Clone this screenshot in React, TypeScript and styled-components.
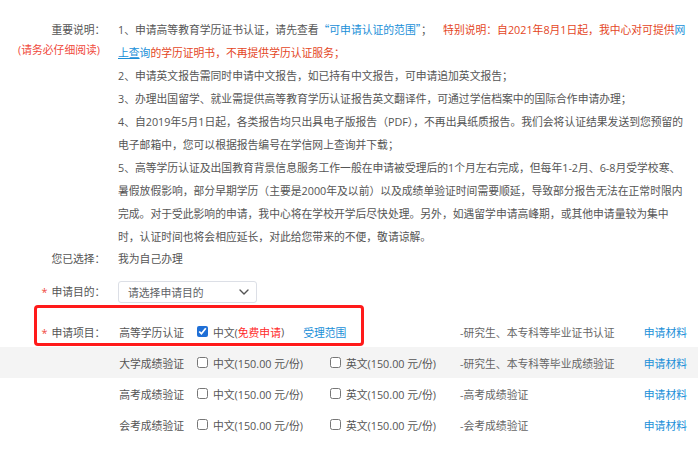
import React from 'react';
import styled, { createGlobalStyle } from 'styled-components';

const textColor = '#555';
const linkColor = '#1a8fd8';
const alertColor = '#e4461e';
const requiredColor = '#f04a3c';

const GlobalStyle = createGlobalStyle`
  html, body {
    margin: 0;
    padding: 0;
    background: #fff;
  }
  body {
    font-family: "Open Sans", "Noto Sans CJK SC", sans-serif;
    font-size: 10.8px;
    color: ${textColor};
  }
`;

const Page = styled.div`
  width: 698px;
  padding-top: 17.5px;
`;

const FieldRow = styled.div<{ $top?: number; $height?: number }>`
  display: grid;
  grid-template-columns: 100px 572px;
  column-gap: 18px;
  align-items: ${(p) => (p.$height ? 'center' : 'start')};
  margin-top: ${(p) => p.$top || 0}px;
  min-height: ${(p) => p.$height || 0}px;
`;

const Label = styled.div`
  display: flex;
  flex-direction: column;
  align-items: flex-end;
  text-align: right;
  line-height: 22px;
  white-space: nowrap;
  font-feature-settings: "halt";
`;

const NoteLabel = styled(Label)`
  line-height: 23px;
`;

const ReadCarefully = styled.span`
  color: ${requiredColor};
  line-height: 18px;
`;

const Required = styled.span`
  color: ${requiredColor};
  margin-right: 4px;
`;

const Notes = styled.div`
  line-height: 23px;
`;

const NoteItem = styled.p`
  margin: 0;
`;

const Link = styled.a<{ $underline?: boolean }>`
  color: ${linkColor};
  text-decoration: ${(p) => (p.$underline ? 'underline' : 'none')};
  cursor: pointer;
`;

const Quote = styled.span`
  font-family: "Noto Sans CJK SC", sans-serif;
  font-feature-settings: "fwid";
`;

const Alert = styled.span`
  color: ${alertColor};
`;

const Value = styled.div`
  line-height: 22px;
`;

const SelectBox = styled.div`
  box-sizing: border-box;
  width: 139px;
  height: 22px;
  display: flex;
  align-items: center;
  justify-content: space-between;
  padding: 0 7px 0 9px;
  border: 1px solid #dcdfe6;
  border-radius: 3px;
  color: #606266;
  background: #fff;
  cursor: pointer;
`;

const Items = styled.div`
  position: relative;
  margin-top: 13.5px;
`;

const ItemRow = styled.div<{ $shaded?: boolean }>`
  display: grid;
  grid-template-columns: 118px 79px 133px 130px 1fr auto;
  align-items: center;
  height: 31px;
  padding-right: 11px;
  background: ${(p) => (p.$shaded ? '#f4f4f4' : 'transparent')};
  white-space: nowrap;
`;

const ItemLabel = styled.div`
  text-align: right;
  padding-right: 18px;
  font-feature-settings: "halt";
`;

const ItemName = styled.div`
  width: 66px;
  text-align: right;
`;

const Option = styled.label<{ $span?: number }>`
  display: flex;
  align-items: center;
  grid-column: span ${(p) => p.$span || 1};
  cursor: pointer;
`;

const Check = styled.input`
  width: 11px;
  height: 11px;
  margin: 0 5px 0 0;
  accent-color: #1f6fd6;
`;

const Free = styled.span`
  color: #ff2a2a;
`;

const ScopeLink = styled(Link)`
  margin-left: 19px;
`;

const Desc = styled.div`
  color: #666;
`;

const Highlight = styled.div`
  position: absolute;
  left: 34px;
  top: -11px;
  width: 330px;
  height: 41px;
  box-sizing: border-box;
  border: 3px solid #ff1a1a;
  border-radius: 4px;
  pointer-events: none;
`;

const Chevron = () => (
  <svg width="10" height="6" viewBox="0 0 10 6" fill="none">
    <path d="M1 1l4 4 4-4" stroke="#555" strokeWidth="1.4" strokeLinecap="round" strokeLinejoin="round" />
  </svg>
);

type Item = { name: string; desc: string };

const paidItems: Item[] = [
  { name: '大学成绩验证', desc: '-研究生、本专科等毕业成绩验证' },
  { name: '高考成绩验证', desc: '-高考成绩验证' },
  { name: '会考成绩验证', desc: '-会考成绩验证' },
];

const App = () => (
  <>
    <GlobalStyle />
    <Page>
      <FieldRow>
        <NoteLabel>
          <span>重要说明：</span>
          <ReadCarefully>(请务必仔细阅读)</ReadCarefully>
        </NoteLabel>
        <Notes>
          <NoteItem>
            1、申请高等教育学历证书认证，请先查看<Link><Quote>“</Quote>可申请认证的范围<Quote>”</Quote></Link>；{'\u00a0\u00a0\u00a0 '}<Alert>特别说明：自2021年8月1日起，我中心对可提供</Alert>
            <Link>网</Link><Link $underline>上查</Link><Link>询</Link>
            <Alert>的学历证明书，不再提供学历认证服务；</Alert>
          </NoteItem>
          <NoteItem>2、申请英文报告需同时申请中文报告，如已持有中文报告，可申请追加英文报告；</NoteItem>
          <NoteItem>3、办理出国留学、就业需提供高等教育学历认证报告英文翻译件，可通过学信档案中的国际合作申请办理；</NoteItem>
          <NoteItem>
            4、自2019年5月1日起，各类报告均只出具电子版报告（PDF），不再出具纸质报告。我们会将认证结果发送到您预留的电子邮箱中，您可以根据报告编号在学信网上查询并下载；
          </NoteItem>
          <NoteItem>
            5、高等学历认证及出国教育背景信息服务工作一般在申请被受理后的1个月左右完成，但每年1-2月、6-8月受学校寒、暑假放假影响，部分早期学历（主要是2000年及以前）以及成绩单验证时间需要顺延，导致部分报告无法在正常时限内完成。对于受此影响的申请，我中心将在学校开学后尽快处理。另外，如遇留学申请高峰期，或其他申请量较为集中时，认证时间也将会相应延长，对此给您带来的不便，敬请谅解。
          </NoteItem>
        </Notes>
      </FieldRow>

      <FieldRow $height={22}>
        <Label>您已选择：</Label>
        <Value>我为自己办理</Value>
      </FieldRow>

      <FieldRow $top={11} $height={22}>
        <Label>
          <span><Required>*</Required>申请目的：</span>
        </Label>
        <SelectBox>
          <span>请选择申请目的</span>
          <Chevron />
        </SelectBox>
      </FieldRow>

      <Items>
        <ItemRow>
          <ItemLabel><Required>*</Required>申请项目：</ItemLabel>
          <ItemName>高等学历认证</ItemName>
          <Option $span={2}>
            <Check type="checkbox" defaultChecked />
            中文(<Free>免费申请</Free>)
            <ScopeLink>受理范围</ScopeLink>
          </Option>
          <Desc>-研究生、本专科等毕业证书认证</Desc>
          <Link>申请材料</Link>
        </ItemRow>
        {paidItems.map((item, i) => (
          <ItemRow key={item.name} $shaded={i === 0}>
            <ItemLabel />
            <ItemName>{item.name}</ItemName>
            <Option>
              <Check type="checkbox" />
              中文(150.00 元/份)
            </Option>
            <Option>
              <Check type="checkbox" />
              英文(150.00 元/份)
            </Option>
            <Desc>{item.desc}</Desc>
            <Link>申请材料</Link>
          </ItemRow>
        ))}
        <Highlight />
      </Items>
    </Page>
  </>
);

export default App;
